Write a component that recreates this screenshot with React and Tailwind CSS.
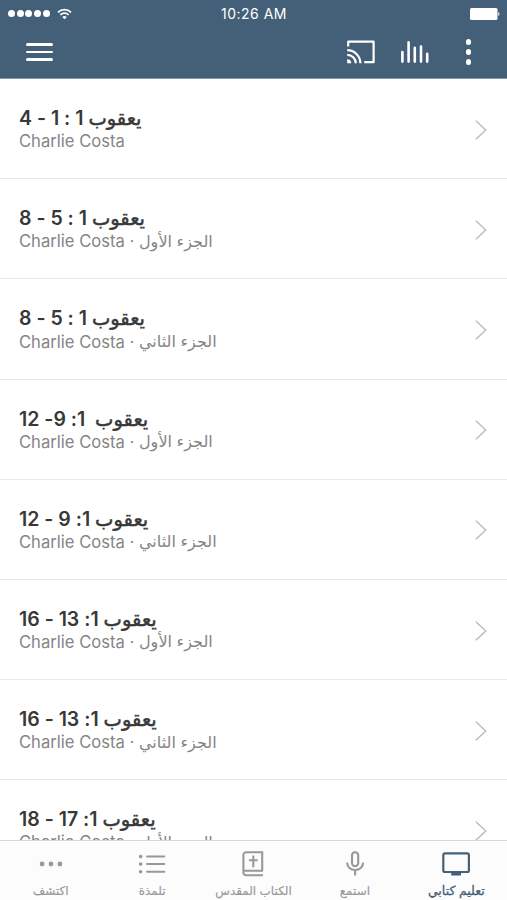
import clsx from 'clsx'

const COSTA = 'Charlie Costa'
const PART_ONE = 'الجزء الأول'
const PART_TWO = 'الجزء الثاني'

const LESSONS = [
  { ref: ' 1 : 1 - 4' },
  { ref: ' 1 : 5 - 8', part: PART_ONE },
  { ref: ' 1 : 5 - 8', part: PART_TWO },
  { ref: '  1: 9- 12', part: PART_ONE },
  { ref: ' 1: 9 - 12', part: PART_TWO },
  { ref: ' 1: 13 - 16', part: PART_ONE },
  { ref: ' 1: 13 - 16', part: PART_TWO },
  { ref: ' 1: 17 - 18', part: PART_ONE },
]

const TABS = [
  { label: 'اكتشف', icon: DotsIcon },
  { label: 'تلمذة', icon: ListIcon },
  { label: 'الكتاب المقدس', icon: BibleIcon },
  { label: 'استمع', icon: MicIcon },
  { label: 'تعليم كتابي', icon: TvIcon, active: true },
]

function WifiIcon() {
  return (
    <svg width="15" height="12" viewBox="0 0 16 12" fill="none" stroke="currentColor" strokeWidth="1.8">
      <path d="M1 4.2a10 10 0 0 1 14 0" />
      <path d="M3.6 6.9a6.3 6.3 0 0 1 8.8 0" />
      <path d="M8 11.6 5.6 9.2a3.4 3.4 0 0 1 4.8 0z" fill="currentColor" stroke="none" />
    </svg>
  )
}

function BatteryIcon() {
  return (
    <svg width="31" height="12" viewBox="0 0 31 12" fill="currentColor">
      <rect width="27.5" height="12" rx="1.5" />
      <path d="M28.3 4c1.6.5 1.6 3.5 0 4z" />
    </svg>
  )
}

function CastIcon() {
  return (
    <svg width="28" height="24" viewBox="0 0 28 24" fill="none" stroke="currentColor" strokeWidth="2.2">
      <path d="M1.2 6.6V1.6h25.4v20.6H17.2" strokeLinejoin="round" />
      <path d="M.2 10.2a13.2 13.2 0 0 1 13.2 13" />
      <path d="M.2 14.8a8.6 8.6 0 0 1 8.6 8.4" />
      <path d="M.2 19.2a4.1 4.1 0 0 1 4.1 4H.2z" fill="currentColor" stroke="none" />
    </svg>
  )
}

function BarsIcon() {
  return (
    <svg width="28" height="22" viewBox="0 0 28 22" stroke="currentColor" strokeWidth="2.6" strokeLinecap="round">
      <path d="M1.4 11v9.6M7.6 1.4v19.2M13.8 6.7v13.9M20 5.5v15.1M26.2 12.9v7.7" />
    </svg>
  )
}

function ChevronIcon() {
  return (
    <svg className="shrink-0" width="12" height="20" viewBox="0 0 12 20" fill="none" stroke="currentColor" strokeWidth="1.3">
      <path d="M.8.7 10.8 10 .8 19.3" />
    </svg>
  )
}

function DotsIcon() {
  return (
    <svg width="24" height="6" viewBox="0 0 24 6" fill="currentColor">
      <circle cx="3.1" cy="3" r="2.4" />
      <circle cx="12" cy="3" r="2.4" />
      <circle cx="20.9" cy="3" r="2.4" />
    </svg>
  )
}

function ListIcon() {
  return (
    <svg width="28" height="20" viewBox="0 0 28 20" fill="currentColor" stroke="currentColor" strokeWidth="2" strokeLinecap="round">
      <path d="M9 2.6h17.3M9 10.1h17.3M9 17.7h17.3" />
      <g stroke="none">
        <circle cx="2.6" cy="2.6" r="1.8" />
        <circle cx="2.6" cy="10.1" r="1.8" />
        <circle cx="2.6" cy="17.7" r="1.8" />
      </g>
    </svg>
  )
}

function BibleIcon() {
  return (
    <svg width="22" height="26" viewBox="0 0 22 26" fill="none" stroke="currentColor" strokeWidth="2.1">
      <path d="M20.2 19.2V1.3H4.2a2.8 2.8 0 0 0-2.8 2.8v17.4a2.8 2.8 0 0 0 2.8 2.8h16.8" />
      <path d="M1.6 19.8h19.4M11.3 4.6v11.6M6.9 9.2h8.8" />
    </svg>
  )
}

function MicIcon() {
  return (
    <svg width="18" height="25" viewBox="0 0 18 25" fill="none" stroke="currentColor" strokeWidth="2.1">
      <rect x="6" y="1.2" width="6.2" height="14" rx="3.1" />
      <path d="M1.1 11.6c.3 4.6 3.5 7.4 8 7.4s7.7-2.8 8-7.4M9.1 19v5.6" />
    </svg>
  )
}

function TvIcon() {
  return (
    <svg width="28" height="24" viewBox="0 0 28 24" fill="none" stroke="currentColor" strokeWidth="2.2">
      <rect x="1.3" y="1.4" width="25.6" height="18.6" rx="1.8" />
      <path d="M9.2 22h9.8" strokeWidth="3" />
    </svg>
  )
}

function Header() {
  return (
    <header className="h-[79px] shrink-0 border-b border-[#8697a7] bg-[#445f78] text-white">
      <div className="grid h-[27px] grid-cols-3 items-center pr-1.5 pl-2">
        <div className="flex items-center gap-[7px]">
          <div className="flex gap-[1.7px]">
            {[0, 1, 2, 3, 4].map(i => <span key={i} className="size-[7px] rounded-full bg-white" />)}
          </div>
          <WifiIcon />
        </div>
        <div className="pr-px text-center text-[14px] tracking-[0.5px] whitespace-nowrap">10:26 AM</div>
        <div className="flex justify-end"><BatteryIcon /></div>
      </div>

      <div className="flex h-[50px] items-center pl-[26px]">
        <div className="flex w-[27px] flex-col gap-[5px]">
          <span className="h-[2.5px] rounded-full bg-white" />
          <span className="h-[2.5px] rounded-full bg-white" />
          <span className="h-[2.5px] rounded-full bg-white" />
        </div>
        <div className="ml-auto flex items-center pr-9">
          <CastIcon />
          <div className="ml-[26px]"><BarsIcon /></div>
          <div className="ml-[37px] flex flex-col gap-[4.5px]">
            {[0, 1, 2].map(i => <span key={i} className="size-[5.5px] rounded-full bg-white" />)}
          </div>
        </div>
      </div>
    </header>
  )
}

function Lesson({ item }) {
  return (
    <li className="flex h-[100.2px] shrink-0 items-center justify-between border-b border-[#e9e9e9] pt-0.5 pr-5 pl-[19px]">
      <div className="whitespace-pre">
        <div dir="rtl" className="flex h-6 items-center justify-end pt-0.5 text-[19.5px] font-semibold text-[#383838]">
          <p>
            <span className="text-[19.5px] font-normal [-webkit-text-stroke:0.5px_#383838]">يعقوب</span>
            {item.ref}
          </p>
        </div>
        <p className="flex h-6 items-center text-[16.6px] text-[#858585]">
          <span>{COSTA}</span>
          {item.part && <span> · </span>}
          {item.part && <span dir="rtl" className="-mt-0.5 text-[16.1px]">{item.part}</span>}
        </p>
      </div>
      <span className="text-[#b9b9b9]"><ChevronIcon /></span>
    </li>
  )
}

export default function App() {
  return (
    <div className="flex h-[900px] w-[507px] flex-col overflow-hidden bg-white font-['Inter','DejaVu_Sans',sans-serif]">
      <Header />

      <ul className="flex min-h-0 flex-1 flex-col overflow-hidden">
        {LESSONS.map((item, i) => <Lesson key={i} item={item} />)}
      </ul>

      {/* Tab bar */}
      <nav className="grid h-[60px] shrink-0 grid-cols-5 border-t border-[#d8d8d8] bg-[#fcfcfc]">
        {TABS.map(({ label, icon: Icon, active }) => (
          <div key={label} className={clsx('flex flex-col items-center', active ? 'text-[#445f78]' : 'text-[#989898]')}>
            <div className="flex h-[45px] items-center"><Icon /></div>
            <span
              dir="rtl"
              className={clsx(
                '-mt-[3px] leading-4 whitespace-nowrap',
                active ? 'text-[12.5px] [-webkit-text-stroke:0.3px_#445f78]' : 'text-[12px] [-webkit-text-stroke:0.15px_#989898]'
              )}
            >
              {label}
            </span>
          </div>
        ))}
      </nav>
    </div>
  )
}
